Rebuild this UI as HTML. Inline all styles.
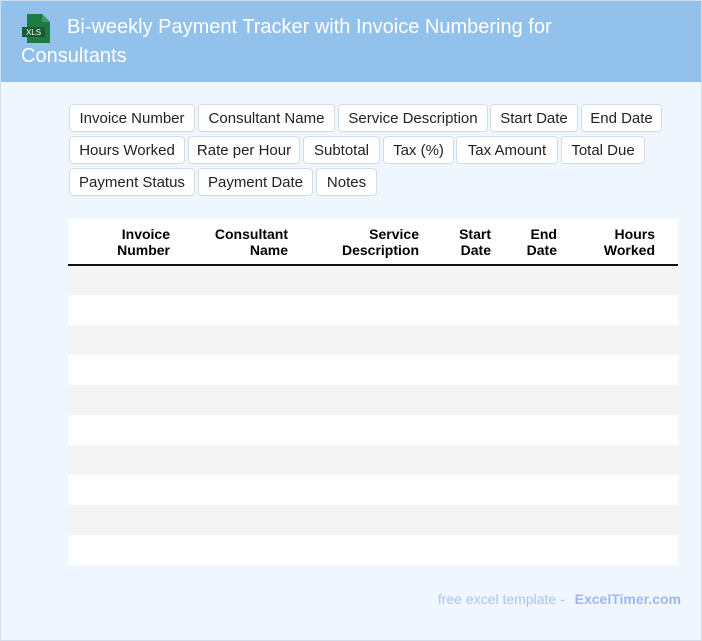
<!DOCTYPE html>
<html><head><meta charset="utf-8"><style>
*{margin:0;padding:0;box-sizing:border-box}
body{width:702px;height:641px;background:#f0f6fe;font-family:"Liberation Sans",Arial,sans-serif;position:relative;overflow:hidden}
.frame{position:absolute;left:0;top:0;width:702px;height:641px;border:1px solid #d5dde8;pointer-events:none}
.hdr{position:absolute;left:0;top:0;width:702px;height:82px;background:#92c1ec}
.title{position:absolute;left:21px;top:13px;width:600px;color:#fff;font-size:20px;line-height:29px;text-indent:46px}
.tag{position:absolute;height:28px;background:#fff;border:1px solid #d6dce4;border-radius:4px;font-size:15px;color:#222;line-height:27px;text-align:center}
table{position:absolute;left:68px;top:219px;width:610px;border-collapse:collapse;background:#fff}
th{font-size:14px;font-weight:bold;text-align:right;line-height:16px;height:46px;border-bottom:2px solid #111;vertical-align:middle;padding:0}
td{height:30px;padding:0}
tr.g td{background:#f4f4f4}
.foot{position:absolute;right:21px;top:591px;font-size:14px;color:#a9c4f0}
.foot b{color:#9db9ee;margin-left:6px}
</style></head><body>
<div class="hdr"></div>
<svg style="position:absolute;left:21px;top:13px" width="32" height="32" viewBox="0 0 32 32">
<path d="M6 1h15l8 8v21H6z" fill="#1e7a45"/><path d="M21 1v8h8z" fill="#3a9a63"/>
<rect x="1" y="14" width="23" height="10" fill="#165c33"/>
<text x="12.5" y="22" font-size="8" fill="#fff" text-anchor="middle" font-family="Liberation Sans">XLS</text></svg>
<div class="title">Bi-weekly Payment Tracker with Invoice Numbering for Consultants</div>
<div class="tag" style="left:69px;top:104px;width:126px">Invoice Number</div>
<div class="tag" style="left:198px;top:104px;width:137px">Consultant Name</div>
<div class="tag" style="left:338px;top:104px;width:150px">Service Description</div>
<div class="tag" style="left:490px;top:104px;width:88px">Start Date</div>
<div class="tag" style="left:581px;top:104px;width:81px">End Date</div>
<div class="tag" style="left:69px;top:136px;width:116px">Hours Worked</div>
<div class="tag" style="left:188px;top:136px;width:112px">Rate per Hour</div>
<div class="tag" style="left:303px;top:136px;width:77px">Subtotal</div>
<div class="tag" style="left:383px;top:136px;width:71px">Tax (%)</div>
<div class="tag" style="left:456px;top:136px;width:102px">Tax Amount</div>
<div class="tag" style="left:561px;top:136px;width:84px">Total Due</div>
<div class="tag" style="left:69px;top:168px;width:126px">Payment Status</div>
<div class="tag" style="left:198px;top:168px;width:115px">Payment Date</div>
<div class="tag" style="left:316px;top:168px;width:61px">Notes</div>
<table>
<tr><th style="width:102px">Invoice<br>Number</th><th style="width:118px">Consultant<br>Name</th><th style="width:131px">Service<br>Description</th><th style="width:72px">Start<br>Date</th><th style="width:66px">End<br>Date</th><th style="width:98px">Hours<br>Worked</th><th></th></tr>
<tr class="g"><td colspan="7"></td></tr><tr><td colspan="7"></td></tr>
<tr class="g"><td colspan="7"></td></tr><tr><td colspan="7"></td></tr>
<tr class="g"><td colspan="7"></td></tr><tr><td colspan="7"></td></tr>
<tr class="g"><td colspan="7"></td></tr><tr><td colspan="7"></td></tr>
<tr class="g"><td colspan="7"></td></tr><tr><td colspan="7"></td></tr>
</table>
<div class="foot">free excel template - <b>ExcelTimer.com</b></div>
<div class="frame"></div>
</body></html>
